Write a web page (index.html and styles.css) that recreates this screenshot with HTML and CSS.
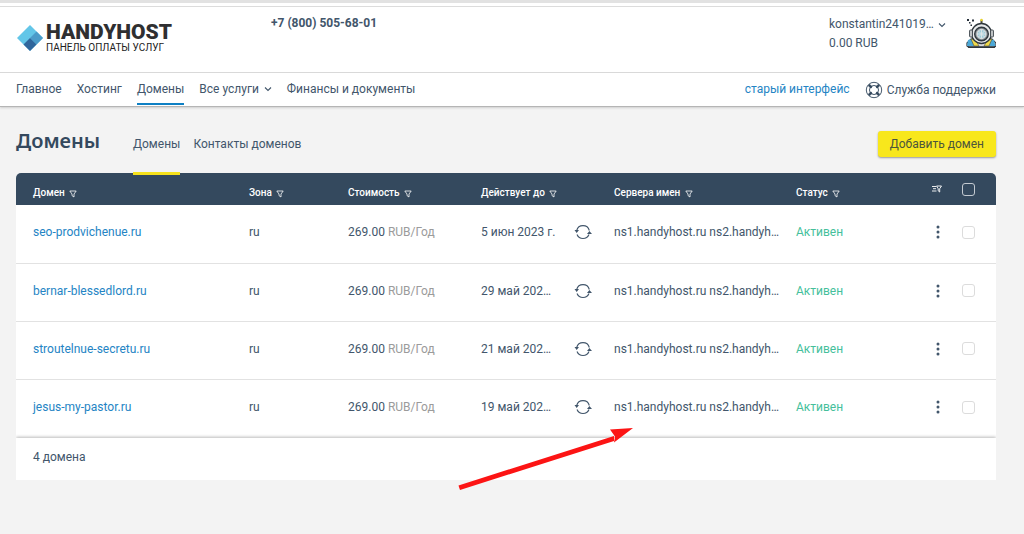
FILE: index.html
```html
<!DOCTYPE html>
<html lang="ru">
<head>
<meta charset="utf-8">
<meta name="viewport" content="width=device-width, initial-scale=1">
<title>Домены — HandyHost</title>
<link rel="stylesheet" href="styles.css">
</head>
<body>
<svg class="sprite" aria-hidden="true">
  <symbol id="filter" viewBox="0 0 8 8"><path d="M.8 1h6.4L5 4v3L3 5.6V4z" fill="none" stroke="currentColor" stroke-width=".8" stroke-linejoin="round"/></symbol>
  <symbol id="chevron" viewBox="0 0 8 8"><path d="M1 2.500 4 5.500l3-3" fill="none" stroke="currentColor" stroke-width="1.100"/></symbol>
  <symbol id="renew" viewBox="0 0 18 18"><path d="M2.700 7.500A6.500 6.500 0 0 1 15.300 7.500M15 11.500A6.500 6.500 0 0 1 3 11.500" fill="none" stroke="currentColor" stroke-width="1.100"/><path d="M.5 7h4.500L2.700 10zM13 11h5L15.400 8z" fill="currentColor"/></symbol>
  <symbol id="dots" viewBox="0 0 4 14"><g fill="currentColor"><circle cx="2" cy="2" r="1.500"/><circle cx="2" cy="7" r="1.500"/><circle cx="2" cy="12" r="1.500"/></g></symbol>
</svg>

<header class="header">
  <a class="logo" href="#">
    <svg class="logo-mark" viewBox="0 0 26 26" aria-hidden="true"><path d="M13 0 26 13 13 26 0 13z" fill="#63c6e8"/><path d="M19.500 6.500 26 13l-6.500 6.500L13 13z" fill="#4b9bc9"/><path d="M13 13l6.500 6.500L13 26l-6.500-6.500z" fill="#30669c"/></svg>
    <span class="logo-text"><b class="logo-name">HANDYHOST</b><span class="logo-sub">ПАНЕЛЬ ОПЛАТЫ УСЛУГ</span></span>
  </a>
  <a class="phone" href="tel:+78005056801">+7 (800) 505-68-01</a>
  <div class="account">
    <button class="user" type="button">konstantin241019… <svg class="chevron"><use href="#chevron"/></svg></button>
    <span>0.00 RUB</span>
  </div>
  <svg class="avatar" viewBox="0 0 30 31" aria-hidden="true">
    <g fill="#26303a"><rect x="1" y="1" width="2" height="2"/><rect x="6" y="1.500" width="2" height="2"/><rect x="3" y="4" width="1.500" height="1.500"/><rect x="4.500" y="6.500" width="1.500" height="1.500"/></g>
    <path d="M15.500 2v5" stroke="#4a4a3c" stroke-width="2"/><circle cx="15.500" cy="2" r="1.300" fill="#e6d12d"/>
    <path d="M1 28v-3l4-4h21l4 4v3l-2 1.500H3z" fill="#d9dadb" stroke="#2f373d" stroke-width="1.200"/>
    <path d="M2 22l4-1 2 7H1z" fill="#4ba8d7"/><path d="M24 21l4 1 1.500 6H23z" fill="#4ba8d7"/>
    <path d="M5 21l4 0 4 7H8zM26 21l-4 0-4 7h5z" fill="#efd94b" stroke="#4d4b35" stroke-width=".6"/>
    <circle cx="15.500" cy="15.500" r="10" fill="#e7e9ea" stroke="#2f373d" stroke-width="1.300"/>
    <rect x="3.500" y="12" width="3" height="7" rx="1" fill="#bfc3c5" stroke="#2f373d" stroke-width=".8"/><rect x="24.500" y="12" width="3" height="7" rx="1" fill="#bfc3c5" stroke="#2f373d" stroke-width=".8"/>
    <circle cx="15.500" cy="16" r="6.800" fill="#8d9599" stroke="#2f373d" stroke-width="1.400"/>
    <circle cx="15.500" cy="16" r="4.500" fill="#9fcbd9" stroke="#e5e5e5"/>
    <path d="M12.500 13l6 6M18.500 13l-6 6M15.500 11.500v9M11 16h9" stroke="#dfe7e9" stroke-width=".9"/>
    <path d="M2 29h27" stroke="#2f373d" stroke-width="1.600"/>
  </svg>
</header>

<nav class="nav">
  <a href="#">Главное</a>
  <a href="#">Хостинг</a>
  <a class="current" href="#">Домены</a>
  <a href="#">Все услуги <svg class="chevron"><use href="#chevron"/></svg></a>
  <a href="#">Финансы и документы</a>
  <a class="old" href="#">старый интерфейс</a>
  <a class="support" href="#"><svg class="buoy" viewBox="0 0 18 18" aria-hidden="true"><g fill="none" stroke="currentColor" stroke-width=".9"><circle cx="9" cy="9" r="7.700"/><circle cx="9" cy="9" r="4.500"/></g><path d="M3.300 4.700 4.700 3.300l2.500 2.500-1.400 1.400zM13.300 3.300l1.400 1.400-2.500 2.500-1.400-1.400zM14.700 13.300l-1.400 1.400-2.500-2.500 1.400-1.400zM4.700 14.700l-1.400-1.400 2.500-2.500 1.400 1.400z" fill="currentColor" stroke="currentColor" stroke-width=".8"/></svg>Служба поддержки</a>
</nav>

<main class="main">
  <div class="title-bar">
    <h1 class="title">Домены</h1>
    <a class="tab active" href="#">Домены</a>
    <a class="tab" href="#">Контакты доменов</a>
    <button class="add" type="button">Добавить домен</button>
  </div>

  <table class="domains">
    <colgroup><col><col class="c-zone"><col class="c-price"><col class="c-date"><col class="c-renew"><col class="c-ns"><col class="c-status"><col class="c-end"><col class="c-end"></colgroup>
    <thead>
      <tr>
        <th>Домен <svg class="filter"><use href="#filter"/></svg></th>
        <th>Зона <svg class="filter"><use href="#filter"/></svg></th>
        <th>Стоимость <svg class="filter"><use href="#filter"/></svg></th>
        <th colspan="2">Действует до <svg class="filter"><use href="#filter"/></svg></th>
        <th>Сервера имен <svg class="filter"><use href="#filter"/></svg></th>
        <th>Статус <svg class="filter"><use href="#filter"/></svg></th>
        <th class="tool"><button class="icon" type="button" aria-label="Фильтры"><svg class="filters" viewBox="0 0 10 8"><path d="M0 1.500h4M1 3.700h3M0 6h4.500M4.500 1h5L7.700 3.700V7L6.200 5.800V3.700z" fill="none" stroke="currentColor" stroke-width=".9"/></svg></button></th>
        <th class="tool"><input class="check" type="checkbox" aria-label="Выбрать все"></th>
      </tr>
    </thead>
    <tbody>
      <tr>
        <td><a href="#">seo-prodvichenue.ru</a></td><td>ru</td><td>269.00 <span class="unit">RUB/Год</span></td><td>5 июн 2023 г.</td>
        <td><button class="icon" type="button" aria-label="Продлить"><svg class="renew"><use href="#renew"/></svg></button></td>
        <td>ns1.handyhost.ru ns2.handyh…</td><td class="status">Активен</td>
        <td><button class="icon more" type="button" aria-label="Действия"><svg class="dots"><use href="#dots"/></svg></button></td>
        <td><input class="check" type="checkbox" aria-label="seo-prodvichenue.ru"></td>
      </tr>
      <tr>
        <td><a href="#">bernar-blessedlord.ru</a></td><td>ru</td><td>269.00 <span class="unit">RUB/Год</span></td><td>29 май 202…</td>
        <td><button class="icon" type="button" aria-label="Продлить"><svg class="renew"><use href="#renew"/></svg></button></td>
        <td>ns1.handyhost.ru ns2.handyh…</td><td class="status">Активен</td>
        <td><button class="icon more" type="button" aria-label="Действия"><svg class="dots"><use href="#dots"/></svg></button></td>
        <td><input class="check" type="checkbox" aria-label="bernar-blessedlord.ru"></td>
      </tr>
      <tr>
        <td><a href="#">stroutelnue-secretu.ru</a></td><td>ru</td><td>269.00 <span class="unit">RUB/Год</span></td><td>21 май 202…</td>
        <td><button class="icon" type="button" aria-label="Продлить"><svg class="renew"><use href="#renew"/></svg></button></td>
        <td>ns1.handyhost.ru ns2.handyh…</td><td class="status">Активен</td>
        <td><button class="icon more" type="button" aria-label="Действия"><svg class="dots"><use href="#dots"/></svg></button></td>
        <td><input class="check" type="checkbox" aria-label="stroutelnue-secretu.ru"></td>
      </tr>
      <tr>
        <td><a href="#">jesus-my-pastor.ru</a></td><td>ru</td><td>269.00 <span class="unit">RUB/Год</span></td><td>19 май 202…</td>
        <td><button class="icon" type="button" aria-label="Продлить"><svg class="renew"><use href="#renew"/></svg></button></td>
        <td>ns1.handyhost.ru ns2.handyh…</td><td class="status">Активен</td>
        <td><button class="icon more" type="button" aria-label="Действия"><svg class="dots"><use href="#dots"/></svg></button></td>
        <td><input class="check" type="checkbox" aria-label="jesus-my-pastor.ru"></td>
      </tr>
    </tbody>
  </table>
  <div class="total">4 домена</div>
  <svg class="pointer" viewBox="0 0 176 64" aria-hidden="true"><path d="M.500 58.500 156 9v5L2 63zM152 2.500 175 1l-19 14.500 1-6z" fill="#fc1414"/></svg>
</main>
</body>
</html>
```
FILE: styles.css
```css
* { box-sizing: border-box; }
body {
  margin: 0;
  min-height: 100vh;
  background: #f3f3f3;
  color: #42566b;
  font: 12px/18px Roboto, "Noto Sans", sans-serif;
}
a { color: inherit; text-decoration: none; }
button { font: inherit; color: inherit; cursor: pointer; }
.sprite { display: none; }
.chevron { width: 8px; height: 8px; margin-left: 2px; }

.header {
  display: flex;
  align-items: flex-start;
  height: 73px;
  padding: 0 28px 0 17px;
  border-top: 3px solid #e2e2e2;
  border-bottom: 1px solid #dadada;
  background: linear-gradient(#fff 3px, #dcdcdc 3px, #dcdcdc 4px, #fff 4px);
}
.logo { display: flex; align-items: center; gap: 3px; width: 254px; padding-top: 19px; color: #2f2f31; }
.logo-mark { width: 26px; height: 26px; }
.logo-text { display: flex; flex-direction: column; }
.logo-name { font: 900 21px/20px Roboto, sans-serif; }
.logo-sub { font: 10px/12px Roboto, sans-serif; color: #222; }
.phone { padding-top: 11px; font-weight: 700; }
.account { margin-left: auto; width: 137px; padding-top: 12px; line-height: 19px; }
.user { display: flex; align-items: center; gap: 2px; padding: 0; border: 0; background: none; }
.avatar { width: 30px; height: 31px; margin-top: 15px; }

.nav {
  display: flex;
  align-items: stretch;
  gap: 15px;
  height: 34px;
  padding: 0 28px 0 16px;
  border-bottom: 1px solid #b5b5b5;
  background: #fff;
  box-shadow: 0 1px 2px #cfcfcf;
}
.nav a { line-height: 32px; white-space: nowrap; }
.nav .current { height: 32px; border-bottom: 2px solid #0e80c4; }
.nav .old { margin-left: auto; color: #2484c4; }
.support { display: flex; align-items: center; gap: 4px; }
.buoy { width: 18px; height: 18px; color: #33485d; }

.main { position: relative; padding: 24px 28px 0 16px; }
.title-bar { display: flex; height: 42px; }
.title { width: 117px; margin: 0; font: 600 20px/20px "Noto Sans", sans-serif; color: #34495e; }
.tab { position: relative; margin-right: 13px; line-height: 26px; }
.active::after {
  content: "";
  position: absolute;
  z-index: 1;
  inset: auto 0 -2px;
  height: 3px;
  background: #f6e21c;
}
.add {
  height: 26px;
  margin-left: auto;
  padding: 0 12px;
  border: 0;
  border-radius: 3px;
  background: #f8e71c;
  box-shadow: 0 1px 2px #999;
  color: #4c563c;
}

.domains { width: 100%; table-layout: fixed; border-collapse: separate; border-spacing: 0; background: #fff; border-radius: 5px 5px 0 0; }
.c-zone { width: 99px; }
.c-price { width: 133px; }
.c-date { width: 93px; }
.c-renew { width: 40px; }
.c-ns { width: 182px; }
.c-status { width: 132px; }
.c-end { width: 34px; }
.domains th { height: 32px; padding: 8px 0 0; background: #34495e; color: #fff; font-size: 10px; line-height: 16px; font-weight: 500; text-align: left; white-space: nowrap; }
.domains .tool { padding: 0; }
.domains th:first-child { padding-left: 17px; border-top-left-radius: 5px; }
.domains th:last-child { border-top-right-radius: 5px; }
.domains td { height: 58px; padding: 0 0 4px; border-bottom: 1px solid #e2e2e2; white-space: nowrap; }
.domains tr:first-child td { height: 59px; }
.domains td:first-child { padding-left: 17px; }
.domains td a { color: #2484c4; }
.domains tr:last-child td { border-bottom: 0; }
.domains .unit { color: #9b9b9b; }
.domains .status { color: #45bf9b; }
.filter { width: 8px; height: 8px; margin-left: 2px; vertical-align: -2px; }
.filters { width: 10px; height: 8px; }
.icon { display: flex; padding: 0; border: 0; background: none; }
.tool .icon { padding-left: 4px; }
.renew { width: 18px; height: 18px; }
.more { padding-left: 8px; }
.dots { width: 4px; height: 14px; }
.check { display: block; appearance: none; width: 13px; height: 13px; margin: 0; border: 1px solid #dcdcdc; border-radius: 3px; }
.tool .check { border-color: #c3cad1; }
.total { position: relative; height: 42px; padding: 10px 17px; background: #fff; box-shadow: 0 -1px 3px #bbb; clip-path: inset(-6px 0 0); }
.pointer { position: absolute; top: 320px; left: 458px; width: 176px; height: 64px; }
```
